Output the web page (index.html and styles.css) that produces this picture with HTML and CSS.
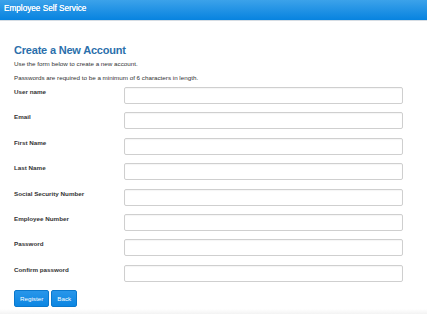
FILE: index.html
```html
<!DOCTYPE html>
<html>
<head>
<meta charset="utf-8">
<link rel="stylesheet" href="styles.css">
</head>
<body>
<header class="topbar"><span class="brand">Employee Self Service</span></header>
<main class="content">
  <h2 class="title">Create a New Account</h2>
  <p class="note">Use the form below to create a new account.</p>
  <p class="note">Passwords are required to be a minimum of 6 characters in length.</p>
  <form class="form">
    <div class="row"><label class="label">User name</label><input class="field" type="text"></div>
    <div class="row"><label class="label">Email</label><input class="field" type="text"></div>
    <div class="row"><label class="label">First Name</label><input class="field" type="text"></div>
    <div class="row"><label class="label">Last Name</label><input class="field" type="text"></div>
    <div class="row"><label class="label">Social Security Number</label><input class="field" type="text"></div>
    <div class="row"><label class="label">Employee Number</label><input class="field" type="text"></div>
    <div class="row"><label class="label">Password</label><input class="field" type="password"></div>
    <div class="row"><label class="label">Confirm password</label><input class="field" type="password"></div>
    <div class="actions">
      <button type="button" class="btn">Register</button>
      <button type="button" class="btn">Back</button>
    </div>
  </form>
</main>
<footer class="footer"></footer>
</body>
</html>
```
FILE: styles.css
```css
html, body {
  margin: 0;
  padding: 0;
  background: #fff;
  font-family: "Liberation Sans", Arial, sans-serif;
  color: #333;
}
.topbar {
  height: 20px;
  background: linear-gradient(to bottom, #3ca2ea, #0783e0);
  border-bottom: 1px solid #d6dde4;
  display: flex;
  align-items: center;
  padding-left: 4px;
}
.brand {
  color: #fff;
  font-size: 8.2px;
  line-height: 1;
  margin-top: -2px;
  text-shadow: 0 0 0.3px #fff;
}
.content {
  padding: 22px 24px 0 14px;
}
.title {
  margin: 0;
  font-size: 11px;
  font-weight: bold;
  letter-spacing: -0.2px;
  color: #2b6fab;
  line-height: 15px;
}
.note {
  margin: 1px 0 0 0;
  font-size: 6.25px;
  line-height: 10px;
}
.note + .note {
  margin-top: 4px;
}
.form {
  margin-top: 4px;
}
.row {
  display: grid;
  grid-template-columns: 110px 1fr;
  align-items: start;
  margin-bottom: 8.4px;
}
.label {
  font-size: 6.25px;
  font-weight: bold;
  line-height: 10px;
}
.field {
  box-sizing: border-box;
  height: 17px;
  width: 100%;
  margin: 0;
  border: 1px solid #cfcfcf;
  border-radius: 2px;
  background: #fff;
  box-shadow: inset 0 1px 1px rgba(0,0,0,0.04);
}
.actions {
  display: flex;
  gap: 2px;
  margin-top: 1.6px;
}
.btn {
  height: 17px;
  padding: 0 5px;
  font-family: "Liberation Sans", Arial, sans-serif;
  font-size: 6.25px;
  color: #fff;
  background: linear-gradient(to bottom, #2896ea, #0c86e2);
  border: 1px solid #0b78cc;
  border-radius: 2px;
}
.footer {
  position: fixed;
  left: 0;
  right: 0;
  bottom: 0;
  height: 5px;
  background: linear-gradient(to bottom, #fff, #f3f3f3);
}
```
